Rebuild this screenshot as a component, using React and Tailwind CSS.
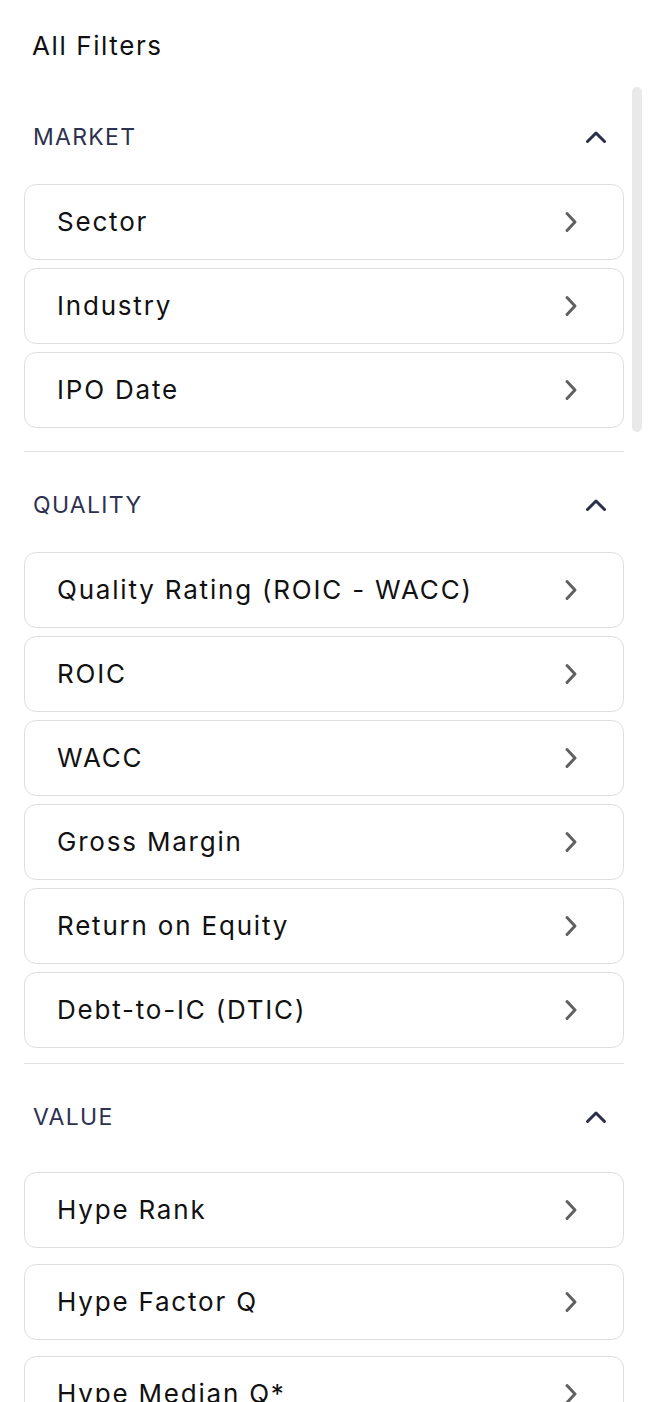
import React from "react";

const ChevronRight = () => (
  <svg width="14" height="22" viewBox="0 0 14 22" fill="none" className="shrink-0">
    <path d="M3 2.5 L11 11 L3 19.5" stroke="#616161" strokeWidth="3" strokeLinecap="round" strokeLinejoin="round" />
  </svg>
);

const ChevronUp = () => (
  <svg width="22" height="14" viewBox="0 0 22 14" fill="none" className="shrink-0">
    <path d="M2.5 11.5 L11 3 L19.5 11.5" stroke="#2a2e4b" strokeWidth="3" strokeLinecap="round" strokeLinejoin="round" />
  </svg>
);

const Card = ({ label }) => (
  <div className="flex h-[76px] items-center justify-between rounded-[12px] border border-[#dedede] bg-white pl-[32px] pr-[45px]">
    <span className="whitespace-nowrap text-[26px] leading-[32px] tracking-[1.8px] text-[#111111]">{label}</span>
    <ChevronRight />
  </div>
);

const Header = ({ title }) => (
  <div className="flex h-[94px] items-center justify-between pl-[9px] pr-[17px]">
    <span className="text-[23px] leading-[28px] tracking-[1.3px] text-[#2d3150]">{title}</span>
    <ChevronUp />
  </div>
);

export default function App() {
  return (
    <div
      className="relative h-[1402px] w-[648px] overflow-hidden bg-white"
      style={{ fontFamily: "Inter, 'Noto Sans', sans-serif" }}
    >
      <div className="h-[88px] pl-[32px] pt-[30px]">
        <h1 className="text-[26px] leading-[32px] tracking-[1.6px] text-[#111111]">All Filters</h1>
      </div>

      <div className="px-6 pt-[2px]">
        <Header title="MARKET" />
        <div className="flex flex-col gap-2">
          <Card label="Sector" />
          <Card label="Industry" />
          <Card label="IPO Date" />
        </div>
        <div className="mt-[23px] h-px bg-[#e2e2e2]" />

        <div className="mt-[6px]">
          <Header title="QUALITY" />
        </div>
        <div className="flex flex-col gap-2">
          <Card label="Quality Rating (ROIC - WACC)" />
          <Card label="ROIC" />
          <Card label="WACC" />
          <Card label="Gross Margin" />
          <Card label="Return on Equity" />
          <Card label="Debt-to-IC (DTIC)" />
        </div>
        <div className="mt-[15px] h-px bg-[#e2e2e2]" />

        <div className="mt-[6px] mb-[8px]">
          <Header title="VALUE" />
        </div>
        <div className="flex flex-col gap-4">
          <Card label="Hype Rank" />
          <Card label="Hype Factor Q" />
          <Card label="Hype Median Q*" />
        </div>
      </div>

      <div className="absolute left-[632px] top-[87px] h-[345px] w-[10px] rounded-full bg-[#e9e9e9]" />
    </div>
  );
}
